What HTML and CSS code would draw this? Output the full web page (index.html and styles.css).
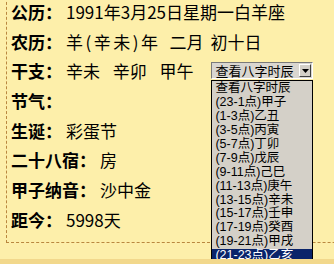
FILE: index.html
```html
<!DOCTYPE html>
<html lang="zh-CN">
<head>
  <meta charset="UTF-8" />
  <title>生日信息</title>
  <link rel="stylesheet" href="styles.css">
</head>
<body>
  <div class="card">
    <div class="row"><b>公历：</b>1991年3月25日星期一白羊座</div>
    <div class="row"><b>农历：</b><span class="year">羊(辛未)年</span><span class="month">二月</span><span class="day">初十日</span></div>
    <div class="row">
      <b>干支：</b><span class="spread">辛未 辛卯 甲午</span>
      <div class="picker">
        <div class="select">
          <span class="current">查看八字时辰</span>
          <span class="arrow"><svg width="7" height="4" viewBox="0 0 7 4"><path d="M0 0h7L3.5 4z" fill="#000"/></svg></span>
        </div>
        <ul class="options">
          <li>查看八字时辰</li>
          <li>(23-1点)甲子</li>
          <li>(1-3点)乙丑</li>
          <li>(3-5点)丙寅</li>
          <li>(5-7点)丁卯</li>
          <li>(7-9点)戊辰</li>
          <li>(9-11点)己巳</li>
          <li>(11-13点)庚午</li>
          <li>(13-15点)辛未</li>
          <li>(15-17点)壬申</li>
          <li>(17-19点)癸酉</li>
          <li>(19-21点)甲戌</li>
          <li class="on">(21-23点)乙亥</li>
        </ul>
      </div>
    </div>
    <div class="row"><b>节气：</b></div>
    <div class="row"><b>生诞：</b>彩蛋节</div>
    <div class="row"><b>二十八宿：</b>房</div>
    <div class="row"><b>甲子纳音：</b>沙中金</div>
    <div class="row"><b>距今：</b>5998天</div>
  </div>
  <div class="foot"></div>
</body>
</html>
```

FILE: styles.css
```css
body {
  margin: 0;
  background: #fdefaa;
  font-family: "Noto Sans CJK SC", "Noto Sans", sans-serif;
  color: #000;
  overflow: hidden;
  height: 264px;
}
.card {
  margin-left: 6px;
  margin-top: -3px;
  width: 400px;
  padding: 0 0 7px 4px;
  border-left: 1px dashed #b9873f;
  border-bottom: 1px dashed #b9873f;
}
.row {
  height: 29.7px;
  line-height: 29.7px;
  font-size: 17px;
  white-space: nowrap;
}
.row b {
  font-weight: 700;
  margin-right: 4px;
}
.year {
  letter-spacing: 2.5px;
}
.month {
  margin-left: 9px;
}
.day {
  margin-left: 7px;
}
.spread {
  word-spacing: 9px;
}
.picker {
  display: inline-block;
  position: relative;
  vertical-align: top;
  margin-top: 6px;
  margin-left: 14px;
  width: 102px;
  line-height: normal;
}
.select {
  display: flex;
  align-items: center;
  height: 17px;
  border: 1px solid #7a7a7a;
  border-right-color: #fff;
  border-bottom-color: #fff;
  background: #d9d6d0;
  box-sizing: border-box;
  font-size: 13px;
}
.current {
  flex: 1;
  padding-left: 3px;
}
.arrow {
  width: 12px;
  height: 13px;
  margin-right: 1px;
  display: flex;
  align-items: center;
  justify-content: center;
  background: #d4d0c8;
  border: 1px solid;
  border-color: #fff #404040 #404040 #fff;
  box-sizing: border-box;
}
.options {
  position: absolute;
  top: 18px;
  left: 0;
  width: 102px;
  margin: 0;
  padding: 1px 0 0;
  list-style: none;
  background: #d4d0c8;
  border: 1px solid #000;
  box-sizing: border-box;
  font-family: "Liberation Sans", "Noto Sans CJK SC", sans-serif;
  font-size: 12.5px;
}
.options li {
  height: 13.9px;
  line-height: 13.9px;
  padding-left: 3px;
}
.options li.on {
  background: #0a246a;
  color: #fff;
}
.foot {
  position: absolute;
  left: 0;
  right: 0;
  top: 259px;
  height: 5px;
  background: #f2d88c;
}
```
